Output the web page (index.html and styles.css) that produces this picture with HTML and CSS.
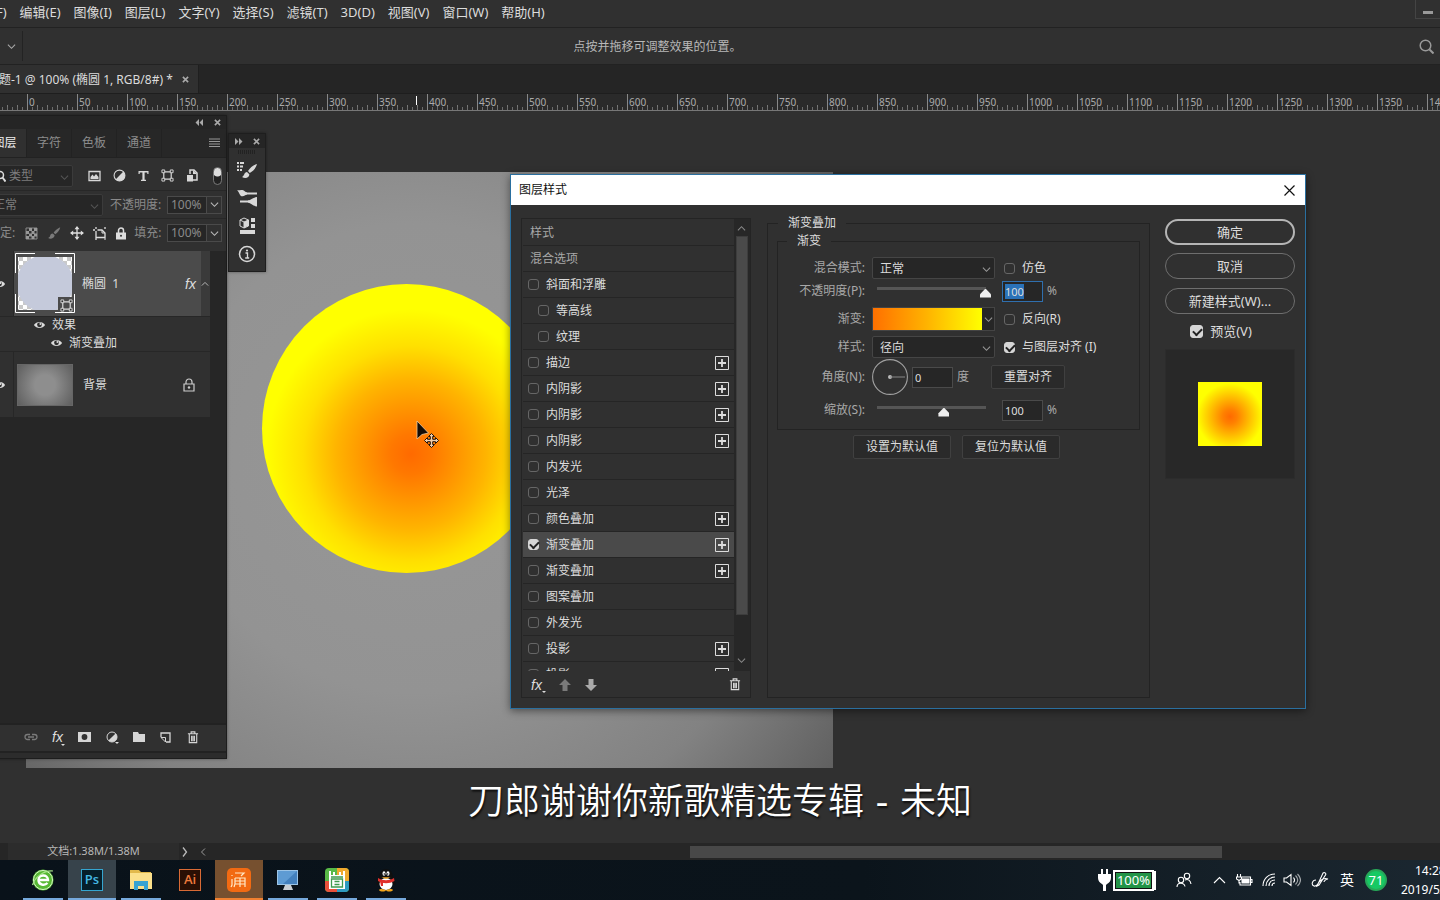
FILE: index.html
```html
<!DOCTYPE html>
<html lang="zh-CN">
<head>
<meta charset="utf-8">
<title>图层样式</title>
<link rel="stylesheet" href="styles.css">
</head>
<body>
<svg class="defs" aria-hidden="true">
  <symbol id="chev" viewBox="0 0 10 10"><path d="M1 3l4 4 4-4" fill="none" stroke="currentColor" stroke-width="1.2"/></symbol>
  <symbol id="eye" viewBox="0 0 14 10"><path d="M1 5C3.500 .6 10.500 .6 13 5 10.500 9.400 3.500 9.400 1 5z" fill="currentColor"/><circle cx="7" cy="4.800" r="2.600" fill="#2f2f2f"/><circle cx="8" cy="3.900" r="1.100" fill="currentColor"/></symbol>
  <symbol id="close" viewBox="0 0 8 8"><path d="M1 1l6 6M7 1L1 7" stroke="currentColor" stroke-width="1.800"/></symbol>
  <symbol id="trash" viewBox="0 0 12 14"><path d="M.5 3h11M4 3V1h4v2M2 3v9.500h8V3M4.500 5v6M6 5v6M7.500 5v6" fill="none" stroke="currentColor" stroke-width="1.200"/></symbol>
  <symbol id="brush" viewBox="0 0 18 18"><path d="M17 1.500c-3 1.200-6.500 4-8.500 7l2 2.200C13.500 8.500 16.500 5 17 1.500zM7.500 9.500c-2 0-3 1-3.400 2.800C3.800 14 3 15 1.500 15.500 4 17 9.500 16.500 9.800 12z" fill="currentColor"/></symbol>
  <symbol id="frame" viewBox="0 0 14 14"><path d="M3 3h8v8H3z" fill="none" stroke="currentColor" stroke-width="1.300"/><path d="M1 1h3v3H1zM10 1h3v3h-3zM1 10h3v3H1zM10 10h3v3h-3z" fill="#303030" stroke="currentColor"/></symbol>
  <symbol id="half" viewBox="0 0 12 12"><circle cx="6" cy="6" r="5" fill="none" stroke="currentColor"/><path d="M9.600 2.400A5 5 0 1 1 2.400 9.600z" fill="currentColor"/></symbol>
  <symbol id="plus" viewBox="0 0 14 14"><path d="M.5.5h13v13H.5z" fill="none" stroke="currentColor"/><path d="M7 3v8M3 7h8" stroke="currentColor" stroke-width="1.800"/></symbol>
</svg>

<div class="app">
  <header class="menubar">
    <nav class="menus">
      <button>文件(F)</button><button>编辑(E)</button><button>图像(I)</button><button>图层(L)</button><button>文字(Y)</button><button>选择(S)</button><button>滤镜(T)</button><button>3D(D)</button><button>视图(V)</button><button>窗口(W)</button><button>帮助(H)</button>
    </nav>
    <button class="minimise" aria-label="最小化"><span></span></button>
  </header>

  <div class="options">
    <button class="tool-drop" aria-label="工具预设"><svg width="9" height="9"><use href="#chev"/></svg></button>
    <p class="hint">点按并拖移可调整效果的位置。</p>
    <button class="search" aria-label="搜索"><svg width="15" height="15" viewBox="0 0 15 15"><circle cx="6.500" cy="6.500" r="5.300" fill="none" stroke="currentColor" stroke-width="1.500"/><path d="M10.500 10.500l4 4" stroke="currentColor" stroke-width="2"/></svg></button>
  </div>

  <div class="tabs">
    <div class="doc-tab"><span>未标题-1 @ 100% (椭圆 1, RGB/8#) *</span><button aria-label="关闭文档"><svg width="7" height="7"><use href="#close"/></svg></button></div>
  </div>

  <div class="ruler" id="ruler"><i class="ruler-mark"></i></div>

  <main class="workspace">
    <div class="document"><div class="ellipse"></div></div>

    <section class="panel">
      <div class="panel-head"><svg width="8" height="7" viewBox="0 0 8 7"><path d="M4 0L.5 3.500 4 7zM8 0L4.500 3.500 8 7z" fill="currentColor"/></svg><button aria-label="关闭面板"><svg width="7" height="7"><use href="#close"/></svg></button></div>
      <div class="panel-tabs">
        <button class="on">图层</button><button>字符</button><button>色板</button><button>通道</button>
        <svg class="burger" width="11" height="9" viewBox="0 0 11 9"><path d="M0 1h11M0 3.500h11M0 6h11M0 8.500h11" stroke="currentColor"/></svg>
      </div>
      <div class="prow filter">
        <div class="pick kind"><svg width="12" height="12" viewBox="0 0 12 12"><circle cx="6" cy="5" r="3.500" fill="none" stroke="#ddd" stroke-width="1.500"/><path d="M8.500 7.500l3 4" stroke="#ddd" stroke-width="2"/></svg><select aria-label="类型"><option>类型</option></select><svg class="arrow" width="9" height="9"><use href="#chev"/></svg></div>
        <div class="filter-icons">
          <svg width="13" height="12" viewBox="0 0 13 12"><path d="M1 1.500h11v9H1z" fill="none" stroke="currentColor" stroke-width="1.300"/><path d="M2.500 9V7l2-2.500L6 6.500 8 4l2.500 3v2z" fill="currentColor"/></svg>
          <svg width="13" height="13"><use href="#half"/></svg>
          <svg width="11" height="12" viewBox="0 0 11 12"><path d="M.5 1h10v3H9.300V2.500H6.600v7.300H8V11H3V9.800h1.400V2.500H1.700V4H.5z" fill="currentColor"/></svg>
          <svg width="13" height="13"><use href="#frame"/></svg>
          <svg width="12" height="13" viewBox="0 0 12 13"><path d="M4 5V1h4l3 3v7H7" fill="none" stroke="currentColor" stroke-width="1.500"/><path d="M1 6h6v6.500H1zM7 1v4h4" fill="currentColor"/></svg>
        </div>
        <span class="toggle"></span>
      </div>
      <div class="prow blend">
        <div class="pick mode"><select aria-label="混合模式"><option>正常</option></select><svg class="arrow" width="9" height="9"><use href="#chev"/></svg></div>
        <label for="po">不透明度:</label>
        <div class="num"><input id="po" value="100%"><button aria-label="展开"><svg width="9" height="9"><use href="#chev"/></svg></button></div>
      </div>
      <div class="prow lock">
        <span>锁定:</span>
        <div class="lock-icons">
          <svg width="13" height="13" viewBox="0 0 13 13"><path d="M1 1h11v11H1z" fill="none" stroke="#888"/><path d="M4 1h3v3H4zM9 1h3v3H9zM1 4h3v3H1zM6.500 4h3v3h-3zM4 6.500h3v3H4zM9 6.500h3v3H9zM1 9h3v3H1zM6.500 9h3v3h-3z" fill="#999"/></svg>
          <svg width="14" height="14" class="dim"><use href="#brush"/></svg>
          <svg width="14" height="14" viewBox="0 0 14 14"><path d="M7 1v12M1 7h12" stroke="currentColor" stroke-width="1.300"/><path d="M7 0l2.500 3.200h-5zM7 14l2.500-3.200h-5zM0 7l3.200-2.500v5zM14 7l-3.200-2.500v5z" fill="currentColor"/></svg>
          <svg width="14" height="13" viewBox="0 0 14 13"><path d="M3 0v2M0 3h2M12 0v2M3 11v2M4.500 3H9l3 3v4.500H3V4" fill="none" stroke="currentColor" stroke-width="1.300"/><path d="M9 3v3h3M12 11v2" fill="none" stroke="currentColor"/></svg>
          <svg width="10" height="13" viewBox="0 0 10 13"><path d="M2.500 6V3.500a2.500 2.500 0 0 1 5 0V6" fill="none" stroke="currentColor" stroke-width="1.500"/><path d="M0 5.500h10v7H0z" fill="currentColor"/><circle cx="5" cy="8.800" r="1" fill="#303030"/></svg>
        </div>
        <label for="pf">填充:</label>
        <div class="num"><input id="pf" value="100%"><button aria-label="展开"><svg width="9" height="9"><use href="#chev"/></svg></button></div>
      </div>
      <div class="layers">
        <div class="layer selected">
          <div class="vis"><svg width="13" height="10"><use href="#eye"/></svg></div>
          <div class="thumb shape"><svg width="60" height="60" viewBox="0 0 60 60"><defs><pattern id="ck" width="8" height="8" patternUnits="userSpaceOnUse"><path d="M0 0h8v8H0z" fill="#fff"/><path d="M0 0h4v4H0zM4 4h4v4H4z" fill="#c9c9c9"/></pattern><clipPath id="tc"><path d="M3 4h54v53H3z"/></clipPath></defs><path d="M3 4h54v53H3z" fill="url(#ck)"/><circle cx="30" cy="30.500" r="28.500" fill="#c5cadb" clip-path="url(#tc)"/><path d="M43 44h17v16H43z" fill="#4b4b4b"/><path d="M.5 20V.5H20M40 .5h19.500V20M.5 41v18.500H20M40 59.500h19.500V41" fill="none" stroke="#fff"/><svg x="45" y="46" width="13" height="13"><use href="#frame"/></svg></svg></div>
          <span class="name">椭圆 &nbsp;1</span><em class="fx">fx</em><span class="fold"><svg width="8" height="8" class="flip"><use href="#chev"/></svg></span>
        </div>
        <div class="effects">
          <div class="effect"><svg width="13" height="10"><use href="#eye"/></svg>效果</div>
          <div class="effect sub"><svg width="13" height="10"><use href="#eye"/></svg>渐变叠加</div>
        </div>
        <div class="layer">
          <div class="vis"><svg width="13" height="10"><use href="#eye"/></svg></div>
          <div class="thumb back"></div>
          <span class="name">背景</span><svg class="padlock" width="12" height="14" viewBox="0 0 12 14"><path d="M3 6V4a3 3 0 0 1 6 0v2M1 6h10v7H1z" fill="none" stroke="currentColor" stroke-width="1.200"/><circle cx="6" cy="9.500" r="1.200" fill="currentColor"/></svg>
        </div>
      </div>
      <div class="panel-tools">
        <button class="dim" aria-label="链接"><svg width="14" height="8" viewBox="0 0 14 8"><path d="M6 1.500H3.500a2.500 2.500 0 0 0 0 5H6M8 1.500h2.500a2.500 2.500 0 0 1 0 5H8M4 4h6" fill="none" stroke="currentColor" stroke-width="1.300"/></svg></button>
        <button class="fxb">fx<i></i></button>
        <button aria-label="蒙版"><svg width="13" height="10" viewBox="0 0 13 10"><path d="M0 0h13v10H0z" fill="currentColor"/><circle cx="6.500" cy="5" r="2.900" fill="#303030"/></svg></button>
        <button aria-label="调整"><svg width="12" height="12"><use href="#half"/></svg><i></i></button>
        <button aria-label="新建组"><svg width="12" height="10" viewBox="0 0 12 10"><path d="M0 0h5l1 2h6v8H0z" fill="currentColor"/></svg></button>
        <button aria-label="新建图层"><svg width="11" height="11" viewBox="0 0 11 11"><path d="M1 5V1h9v9H6" fill="none" stroke="currentColor" stroke-width="1.300"/><path d="M1 5.500h4.500V10z" fill="none" stroke="currentColor"/></svg></button>
        <button aria-label="删除图层"><svg width="12" height="13"><use href="#trash"/></svg></button>
      </div>
      <div class="grip"></div>
    </section>

    <aside class="dock">
      <div class="dock-head"><svg width="8" height="7" viewBox="0 0 8 7"><path d="M0 0l3.500 3.500L0 7zM4 0l3.500 3.500L4 7z" fill="currentColor"/></svg><svg width="7" height="7"><use href="#close"/></svg></div>
      <div class="dock-grip"></div>
      <button aria-label="画笔设置"><svg width="22" height="20" viewBox="0 0 22 20"><path d="M1 3h2M4 3h4M1 6.500h2M4 6.500h3M1 10h2M4 10h2" stroke="currentColor" stroke-width="2"/><path d="M21 4c-4 1-7 4-9 7l1.800 2C17 11 20 8 21 4zM11 12c-3 0-2.500 4-5 5 3 1.800 7.500 1 7.300-2.800z" fill="currentColor"/></svg></button>
      <button aria-label="画笔"><svg width="21" height="18" viewBox="0 0 21 18"><path d="M9 4.500h11M3 12.500h9" stroke="currentColor" stroke-width="2"/><path d="M0 1c2 .8 3-.5 5.500 0C7.500 1.300 8 3.200 10 3.500v2C8 6 7.500 7.300 5.500 7.300 2.500 7.300 2.500 3.500 0 1zM11 11.500C14 11 15.500 8.500 20 8v9.500c-4.500-.5-6-3.500-9-4z" fill="currentColor"/></svg></button>
      <button aria-label="库"><svg width="17" height="18" viewBox="0 0 17 18"><path d="M5 1l4.500 2v6L5 11 1 9V3z" fill="none" stroke="currentColor"/><path d="M1 3l4 2 4.500-2M5 5v6" fill="none" stroke="currentColor"/><path d="M5 5l4-2v6l-4 2zM12 1h4v4h-4zM12 7h4v4h-4zM1 13h15v4H1z" fill="currentColor"/></svg></button>
      <button aria-label="信息"><svg width="18" height="18" viewBox="0 0 18 18"><circle cx="9" cy="9" r="7.500" fill="none" stroke="currentColor" stroke-width="1.500"/><circle cx="9" cy="5.500" r="1.100" fill="currentColor"/><path d="M7.500 8h2v5M7.200 13h4" fill="none" stroke="currentColor" stroke-width="1.300"/></svg></button>
    </aside>

    <svg class="pointer" width="24" height="28" viewBox="0 0 24 28"><path d="M2 0v18l5-4.500 6.500-1.500z" fill="#130b05" stroke="#e8c9a0" stroke-width=".8"/><path d="M16.500 12.500l3 3h-1.800v2.800h2.800v-1.800l3 3-3 3v-1.800h-2.800v2.800h1.800l-3 3-3-3h1.800v-2.800h-2.800v1.800l-3-3 3-3v1.800h2.800v-2.800h-1.800z" fill="#f0cfb0" stroke="#20120a"/></svg>

    <section class="dialog" role="dialog" aria-labelledby="dt">
      <div class="dialog-title"><h1 id="dt">图层样式</h1><button aria-label="关闭"><svg width="11" height="11" viewBox="0 0 11 11"><path d="M.5.5l10 10M10.500.5l-10 10" stroke="#111" stroke-width="1.200"/></svg></button></div>
      <div class="dialog-body">
        <div class="style-box">
          <div class="style-main">
            <div class="style-list">
              <div class="srow head">样式</div>
              <div class="srow head">混合选项</div>
              <div class="srow"><label><input type="checkbox">斜面和浮雕</label></div>
              <div class="srow in"><label><input type="checkbox">等高线</label></div>
              <div class="srow in"><label><input type="checkbox">纹理</label></div>
              <div class="srow"><label><input type="checkbox">描边</label><button aria-label="添加"><svg width="14" height="14"><use href="#plus"/></svg></button></div>
              <div class="srow"><label><input type="checkbox">内阴影</label><button aria-label="添加"><svg width="14" height="14"><use href="#plus"/></svg></button></div>
              <div class="srow"><label><input type="checkbox">内阴影</label><button aria-label="添加"><svg width="14" height="14"><use href="#plus"/></svg></button></div>
              <div class="srow"><label><input type="checkbox">内阴影</label><button aria-label="添加"><svg width="14" height="14"><use href="#plus"/></svg></button></div>
              <div class="srow"><label><input type="checkbox">内发光</label></div>
              <div class="srow"><label><input type="checkbox">光泽</label></div>
              <div class="srow"><label><input type="checkbox">颜色叠加</label><button aria-label="添加"><svg width="14" height="14"><use href="#plus"/></svg></button></div>
              <div class="srow current"><label><input type="checkbox" checked>渐变叠加</label><button aria-label="添加"><svg width="14" height="14"><use href="#plus"/></svg></button></div>
              <div class="srow"><label><input type="checkbox">渐变叠加</label><button aria-label="添加"><svg width="14" height="14"><use href="#plus"/></svg></button></div>
              <div class="srow"><label><input type="checkbox">图案叠加</label></div>
              <div class="srow"><label><input type="checkbox">外发光</label></div>
              <div class="srow"><label><input type="checkbox">投影</label><button aria-label="添加"><svg width="14" height="14"><use href="#plus"/></svg></button></div>
              <div class="srow"><label><input type="checkbox">投影</label><button aria-label="添加"><svg width="14" height="14"><use href="#plus"/></svg></button></div>
            </div>
            <div class="vscroll"><svg width="9" height="9" class="flip"><use href="#chev"/></svg><div class="vtrack"><div class="vthumb"></div></div><svg width="9" height="9"><use href="#chev"/></svg></div>
          </div>
          <div class="style-tools">
            <button class="fxb">fx<i></i></button>
            <button class="dim" aria-label="上移"><svg width="12" height="12" viewBox="0 0 12 12"><path d="M6 0l6 6H8.500v6h-5V6H0z" fill="currentColor"/></svg></button>
            <button class="mid" aria-label="下移"><svg width="12" height="12" viewBox="0 0 12 12"><path d="M6 12l6-6H8.500V0h-5v6H0z" fill="currentColor"/></svg></button>
            <button class="end" aria-label="删除"><svg width="12" height="13"><use href="#trash"/></svg></button>
          </div>
        </div>

        <fieldset class="overlay">
          <legend>渐变叠加</legend>
          <fieldset class="gradient">
            <legend>渐变</legend>
            <div class="frow r24"><label class="cap" for="bm">混合模式:</label><div class="pick"><select id="bm"><option>正常</option></select><svg class="arrow" width="9" height="9"><use href="#chev"/></svg></div><label class="chk"><input type="checkbox">仿色</label></div>
            <div class="frow r22"><label class="cap" for="op">不透明度(P):</label><input class="slide" id="op" type="range" min="0" max="100" value="100"><div class="field focus"><span>100</span><input aria-label="不透明度数值" value=""></div><span class="unit">%</span></div>
            <div class="frow r34"><label class="cap" for="gr">渐变:</label><div class="swatch"><button id="gr" aria-label="编辑渐变"></button><button class="more" aria-label="渐变列表"><svg width="9" height="9"><use href="#chev"/></svg></button></div><label class="chk"><input type="checkbox">反向(R)</label></div>
            <div class="frow r22"><label class="cap" for="st">样式:</label><div class="pick"><select id="st"><option>径向</option></select><svg class="arrow" width="9" height="9"><use href="#chev"/></svg></div><label class="chk"><input type="checkbox" checked>与图层对齐 (I)</label></div>
            <div class="frow r38"><label class="cap" for="an">角度(N):</label><svg class="dial" width="36" height="36" viewBox="0 0 36 36"><circle cx="18" cy="18" r="17.400" fill="none" stroke="#a0a0a0" stroke-width="1.100"/><circle cx="18" cy="18" r="2" fill="#bbb"/><path d="M18 18h15" stroke="#888"/></svg><input class="box" id="an" value="0"><span class="unit">度</span><button class="btn reset">重置对齐</button></div>
            <div class="frow r28"><label class="cap" for="sc">缩放(S):</label><input class="slide" id="sc" type="range" min="1" max="162" value="100"><input class="box" aria-label="缩放数值" value="100"><span class="unit">%</span></div>
          </fieldset>
          <div class="defaults"><button class="btn">设置为默认值</button><button class="btn">复位为默认值</button></div>
        </fieldset>

        <div class="actions">
          <button class="pill main">确定</button>
          <button class="pill">取消</button>
          <button class="pill new">新建样式(W)...</button>
          <label class="chk"><input type="checkbox" checked>预览(V)</label>
          <div class="preview"><div></div></div>
        </div>
      </div>
    </section>

    <p class="caption">刀郎谢谢你新歌精选专辑<span> - </span>未知</p>
  </main>

  <footer class="status">
    <div class="doc-size">文档:1.38M/1.38M</div>
    <svg width="6" height="10" viewBox="0 0 6 10"><path d="M1 .5L4.500 5 1 9.500" fill="none" stroke="#bbb" stroke-width="1.300"/></svg>
    <svg class="back-arrow" width="6" height="8" viewBox="0 0 6 8"><path d="M5 .5L1.500 4 5 7.500" fill="none" stroke="#999"/></svg>
    <div class="hscroll"><div></div></div>
  </footer>

  <div class="taskbar">
    <div class="apps">
      <button class="task run" aria-label="浏览器"><svg width="24" height="24" viewBox="0 0 24 24"><circle cx="12" cy="12" r="10.500" fill="#57b833"/><circle cx="12" cy="12" r="9.500" fill="none" stroke="#d8f5c8" stroke-width="1"/><path d="M7.500 12h9.500c0-6-9.500-6-9.500 0 0 5 6 6 9 3" fill="none" stroke="#fff" stroke-width="2.400"/><path d="M1.500 17C4 9 13 2 22 3" fill="none" stroke="#a9e58b" stroke-width="1.200"/></svg></button>
      <button class="task run full ps"><span class="logo">Ps</span></button>
      <button class="task run" aria-label="文件资源管理器"><svg width="24" height="22" viewBox="0 0 24 22"><path d="M1 3V1h9l2 2h10v2H1z" fill="#e2b94c"/><path d="M1 4h22v16H1z" fill="#fbe08b"/><path d="M5 21v-9h14v9h-4v-4H9v4z" fill="#38a3d1"/></svg></button>
      <button class="task ai"><span class="logo">Ai</span></button>
      <button class="task run full wps" aria-label="应用"><svg width="26" height="26" viewBox="0 0 26 26"><rect x="1" y="1" width="24" height="24" rx="5" fill="#f26a12"/><path d="M9 11h10v9M9 11v6l-1 3M14 11v9M9 14h10M9 17h10M9 6h9l-3 3M6 8v1M6 12v6l-1 2" fill="none" stroke="#ffe9c8" stroke-width="1.200"/></svg></button>
      <button class="task run" aria-label="此电脑"><svg width="24" height="24" viewBox="0 0 24 24"><path d="M1 2h21v15H1z" fill="#9cc4e6"/><path d="M2 3h19v13H2z" fill="#4380bd"/><path d="M2 3h19L7 16H2z" fill="#5e9bd3"/><path d="M9 17h6l2 5H7z" fill="#c9ced3"/></svg></button>
      <button class="task run" aria-label="应用"><svg width="26" height="26" viewBox="0 0 26 26"><rect x="1" y="1" width="24" height="24" rx="4" fill="#58b947"/><path d="M1 14h12v11H5a4 4 0 0 1-4-4z" fill="#e9503a"/><path d="M13 14h12v7a4 4 0 0 1-4 4h-8z" fill="#2e9ac0"/><path d="M13 1h8a4 4 0 0 1 4 4v9H13z" fill="#f0a92d"/><path d="M5 8h16v14H5z" fill="#fff"/><path d="M6 4v4M20 4v4M10 5v3M16 5v3" stroke="#fff" stroke-width="2"/><path d="M7.500 20v-8h11v8zM7 10h12M10.500 14.500h5M10.500 17.500h5" fill="none" stroke="#3f9b4e" stroke-width="1.300"/></svg></button>
      <button class="task run" aria-label="QQ"><svg width="22" height="24" viewBox="0 0 22 24"><path d="M4 10c0-12 14-12 14 0 2 3 3.500 6 2 7-1 .5-2-1-2-1H4s-1 1.500-2 1c-1.500-1 0-4 2-7z" fill="#101010"/><ellipse cx="11" cy="16" rx="6.500" ry="6" fill="#fff"/><path d="M3 10c5 3 11 3 16 0l.5 3C14 16 8 16 3 13z" fill="#e0302c"/><path d="M5 13h3v5H6z" fill="#e0302c"/><ellipse cx="9" cy="5.500" rx="1.500" ry="2.200" fill="#fff"/><ellipse cx="13" cy="5.500" rx="1.500" ry="2.200" fill="#fff"/><circle cx="9.300" cy="6" r=".7"/><circle cx="12.700" cy="6" r=".7"/><path d="M6.500 9.200h9L11 11z" fill="#f4a61c"/><path d="M4 22c1-2 6-1 7 .5 1-1.500 6-2.500 7-.5-1 2-6 2-7 .5-1 1.500-6 1.500-7-.5z" fill="#f4a61c"/></svg></button>
    </div>
    <div class="tray">
      <div class="power"><svg width="13" height="22" viewBox="0 0 13 22"><path d="M3 0h2v5h3V0h2v5h3v4c0 3-2 5-4 6l-1 1v6H5v-6l-1-1C2 14 0 12 0 9V5h3z" fill="#fff"/></svg><span class="battery">100%</span></div>
      <svg class="people" width="16" height="16" viewBox="0 0 16 16"><circle cx="11" cy="4" r="2.700"/><circle cx="5" cy="8" r="2.700"/><path d="M1 15c0-5 7-5 8-.5M9 8c3-1.500 5.500.5 6 4"/></svg>
      <svg class="up" width="13" height="8" viewBox="0 0 13 8"><path d="M1 7l5.500-5.500L12 7"/></svg>
      <svg class="t1" width="17" height="12" viewBox="0 0 17 12"><path d="M6 3h8.500v8H4V8M14.500 5.500H16v3h-1.500M1.500 0v2.500M4.500 0v2.500M.5 3h5v2L3 6.500.5 5zM3 6v3h1"/><path d="M6 5h7v4H6z" fill="#fff"/></svg>
      <svg class="t2" width="14" height="14" viewBox="0 0 14 14"><path d="M1 13C1 6 6 1 13 1M4 13c0-5 4-9 9-9M7 13c0-3 2-6 6-6M10 13c0-2 1-3 3-3"/></svg>
      <svg class="t3" width="18" height="14" viewBox="0 0 18 14"><path d="M1 5h2.500L8 1.500v11L3.500 9H1zM10.500 4.500c1.300 1.500 1.300 3.500 0 5"/><path d="M12.500 2.500c3 3 3 6 0 9M14.500 1c4 4 4 8 0 12" opacity=".6"/></svg>
      <svg class="t4" width="18" height="16" viewBox="0 0 18 16"><path d="M7 12l5-11c1.500-1 3.500 0 2.500 2L8 13l-2 1zM5 8c-4 0-5 5-2 6s4-3 6-5 5-3 8-2c-2 0-4 2-4 3"/></svg>
      <span class="ime">英</span>
      <span class="score">71</span>
      <time class="clock"><span>14:28</span><span>2019/5/</span></time>
    </div>
  </div>
</div>
<script src="ruler.js"></script>
</body>
</html>
```
FILE: ruler.js
```js
const ruler = document.getElementById('ruler');
const step = 50;
for (let value = 0; value < ruler.clientWidth - step / 2; value += step) {
  const mark = document.createElement('span');
  mark.textContent = value;
  ruler.appendChild(mark);
}
```
FILE: styles.css
```css
* { box-sizing: border-box; }
body { margin: 0; background: #303030; color: #dcdcdc; font: 12px/18px "Noto Sans", "Noto Sans CJK SC", sans-serif; }
button, input, select { font: inherit; color: inherit; margin: 0; padding: 0; border: 0; background: none; border-radius: 0; }
button { display: flex; align-items: center; justify-content: center; white-space: nowrap; }
select { appearance: none; outline: 0; }
p, h1 { margin: 0; font-weight: 400; }
svg { display: block; flex: none; }
.defs { position: absolute; width: 0; height: 0; }
.flip { transform: scaleY(-1); }
.dim { color: #7a7a7a; }

.app { height: 100vh; display: flex; flex-direction: column; overflow: hidden; }

.menubar { height: 28px; flex: none; display: flex; justify-content: space-between; border-bottom: 1px solid #222; overflow: hidden; }
.menus { display: flex; gap: 13px; margin-left: -34px; height: 24px; font-size: 13px; }
.minimise { width: 25px; height: 19px; border-left: 1px solid #444; border-bottom: 1px solid #444; }
.minimise span { width: 10px; height: 3px; margin-top: 7px; background: #999; }

.options { height: 37px; flex: none; display: flex; align-items: center; border-bottom: 1px solid #222; }
.tool-drop { width: 23px; height: 30px; border-right: 1px solid #232323; color: #aaa; }
.hint { flex: 1; text-align: center; color: #b8b8b8; padding: 2px 124px 0 0; }
.search { width: 20px; margin-right: 4px; color: #999; }

.tabs { height: 28px; flex: none; display: flex; background: #252525; }
.doc-tab { display: flex; align-items: center; gap: 9px; margin-left: -39px; padding: 1px 9px 0 14px; background: #303030; border-right: 1px solid #1f1f1f; white-space: nowrap; }
.doc-tab button { color: #aaa; }

.ruler { position: relative; height: 18px; flex: none; display: flex; padding-left: 27px; overflow: hidden; background: repeating-linear-gradient(90deg, #6c6c6c 0 1px, transparent 1px 5px) 2px 100% / 100% 3px no-repeat, repeating-linear-gradient(90deg, #777 0 1px, transparent 1px 10px) 7px 100% / 100% 5px no-repeat, #2a2a2a; border-top: 1px solid #1e1e1e; border-bottom: 1px solid #777; color: #aaa; font-size: 10px; }
.ruler span { flex: 0 0 50px; padding-left: 1px; border-left: 1px solid #888; line-height: 17px; }
.ruler-mark { position: absolute; left: 416px; top: 2px; width: 1px; height: 9px; background: #fff; }

.workspace { position: relative; flex: 1; min-height: 0; overflow: hidden; background: #303030; }
.document { position: absolute; left: 26px; top: 61px; width: 807px; height: 596px; background: radial-gradient(circle at 48% 48%, #979797 0, #939393 45%, #828282 75%, #606060 100%); }
.ellipse { width: 289px; height: 289px; margin: 112px 0 0 236px; border-radius: 50%; background: radial-gradient(circle at 149px 170px, #ff6a00 0, #ff7800 20px, #ffb400 75px, #ffe000 108px, #ffff00 145px); }
.pointer { position: absolute; left: 415px; top: 310px; }

/* layers panel */
.panel { position: absolute; left: -20px; top: 4px; width: 247px; background: #303030; border: 1px solid #1d1d1d; box-shadow: 0 0 3px #0006; }
.panel-head { height: 13px; display: flex; align-items: center; justify-content: flex-end; gap: 11px; padding-right: 5px; background: #252525; color: #aaa; }
.panel-tabs { height: 29px; display: flex; background: #272727; border-bottom: 1px solid #222; position: relative; }
.panel-tabs button { width: 45px; border-right: 1px solid #222; color: #8c8c8c; }
.panel-tabs .on { width: 46px; background: #303030; color: #eee; padding-left: 2px; }
.burger { margin: 9px 6px 0 auto; color: #999; }
.prow { display: flex; align-items: center; height: 28px; border-bottom: 1px solid #272727; color: #8a8a8a; }
.prow.filter { height: 33px; padding: 3px 4px 0 6px; }
.pick { position: relative; width: 123px; height: 22px; background: #262626; border: 1px solid #454545; border-radius: 2px; display: flex; align-items: center; }
.pick select { flex: 1; height: 100%; min-width: 0; padding-left: 7px; padding-top: 1px; }
.pick .arrow { position: absolute; right: 3px; top: 7px; color: #999; pointer-events: none; }
.prow .pick { border-color: #3b3b3b; color: #7d7d7d; }
.prow .pick .arrow { color: #555; }
.kind { width: 86px; padding-left: 6px; }
.kind select { padding-left: 3px; }
.filter-icons { display: flex; align-items: center; gap: 12px; margin-left: 15px; color: #d8d8d8; }
.toggle { width: 9px; height: 18px; margin-left: auto; border: 1px solid #777; border-radius: 5px; background: radial-gradient(circle at 50% 4px, #ddd 4px, #222 5px); }
.blend .mode { width: 118px; margin-left: 4px; }
.blend, .lock { padding-right: 4px; }
.blend label { margin-left: 7px; }
.num { width: 55px; height: 18px; margin-left: auto; display: flex; border: 1px solid #4a4a4a; }
.num input { width: 39px; padding-left: 3px; background: #262626; border-right: 1px solid #4a4a4a; }
.num button { flex: 1; color: #bbb; }
.lock { padding-left: 7px; border-bottom: 0; height: 32px; padding-bottom: 4px; }
.lock-icons { display: flex; align-items: center; gap: 9px; margin: 0 8px 0 10px; color: #ddd; }
.layers { height: 474px; background: #262626; border-bottom: 2px solid #222; padding-right: 16px; }
.layer { height: 65px; display: flex; align-items: center; background: #303030; position: relative; }
.vis { width: 33px; align-self: stretch; display: flex; align-items: center; padding-left: 12px; background: #303030; border-right: 1px solid #272727; color: #ddd; }
.selected { background: linear-gradient(90deg, #4b4b4b calc(100% - 9px), #3a3a3a calc(100% - 9px)); }
.thumb { margin-left: 1px; }
.shape { margin-bottom: 2px; }
.back { width: 56px; height: 42px; margin: 0 3px 0 3px; border: 1px solid #666; background: radial-gradient(circle, #8e8e8e 30%, #5e5e5e 100%); }
.name { margin-left: 7px; flex: 1; }
.fx, .fxb { font: italic 14px/16px "Liberation Sans", sans-serif; color: #ddd; }
.fold { width: 9px; margin-left: 5px; color: #bbb; }
.padlock { margin-right: 15px; color: #ccc; }
.effects { height: 36px; background: #303030; padding-left: 33px; border-top: 1px solid #272727; border-bottom: 1px solid #272727; }
.effect { height: 18px; padding-left: 19px; display: flex; align-items: center; gap: 6px; line-height: 14px; padding-bottom: 3px; }
.effect.sub { padding-left: 36px; }
.panel-tools { height: 26px; display: flex; align-items: center; padding: 0 0 2px 36px; color: #d5d5d5; }
.panel-tools button { width: 27px; position: relative; }
.fxb i, .panel-tools i { display: block; width: 0; height: 0; border: 2px solid transparent; border-top-color: #ddd; border-bottom: 0; align-self: flex-end; }
.panel-tools i { position: absolute; right: 6px; bottom: -1px; }
.grip { height: 7px; border-top: 2px solid #222; background: #2c2c2c; }

.dock { position: absolute; left: 228px; top: 22px; width: 38px; height: 139px; background: #303030; border: 1px solid #1e1e1e; color: #d8d8d8; display: flex; flex-direction: column; align-items: center; box-shadow: 0 0 3px #0006; }
.dock-head { width: 100%; height: 14px; display: flex; align-items: center; justify-content: space-between; padding: 0 5px 0 6px; background: #252525; color: #aaa; }
.dock-grip { width: 18px; height: 4px; margin: 2px 0; background: repeating-linear-gradient(90deg, #222 0 1px, transparent 1px 2px); }
.dock button { height: 28px; }

/* layer style dialog */
.dialog { position: absolute; left: 510px; top: 63px; width: 796px; height: 535px; display: flex; flex-direction: column; background: #303030; border: 1px solid #2a6f9f; box-shadow: 0 2px 8px #0007; }
.dialog-title { height: 30px; flex: none; display: flex; align-items: center; justify-content: space-between; padding: 0 10px 0 8px; background: #fff; color: #111; }
.dialog-title h1 { font-size: 12px; }
.dialog-body { flex: 1; min-height: 0; display: flex; padding: 13px 10px 10px; }
.style-box { width: 230px; flex: none; display: flex; flex-direction: column; border: 1px solid #242424; }
.style-main { height: 452px; display: flex; }
.style-list { flex: 1; overflow: hidden; padding: 1px 0 0 1px; }
.srow { height: 26px; display: flex; align-items: center; justify-content: space-between; padding: 0 5px; border-bottom: 1px solid #252525; }
.srow label { display: flex; align-items: center; gap: 7px; }
.srow.head { padding-left: 7px; color: #a8a8a8; }
.srow.in { padding-left: 15px; }
.srow.current { background: #4a4a4a; }
input[type="checkbox"] { appearance: none; position: relative; width: 11px; height: 11px; flex: none; border: 1px solid #666; border-radius: 3px; }
input[type="checkbox"]:checked { background: #d6d6d6; border-color: #d6d6d6; }
input[type="checkbox"]:checked::before { content: ""; position: absolute; left: 1px; top: 1px; width: 7px; height: 4px; border: solid #222; border-width: 0 0 2px 2px; transform: rotate(-45deg); }
.vscroll { width: 16px; display: flex; flex-direction: column; align-items: center; background: #272727; padding: 5px 1px 6px 0; color: #888; }
.vtrack { flex: 1; width: 12px; margin: 3px 0; }
.vthumb { height: 91%; background: #4a4a4a; border: 1px solid #3d3d3d; }
.style-tools { flex: 1; display: flex; align-items: center; gap: 14px; padding: 1px 9px 0 10px; }
.style-tools .fxb { width: 13px; }
.style-tools .mid { color: #aaa; }
.style-tools .end { margin-left: auto; }
fieldset { margin: 0; min-width: 0; border: 1px solid #232323; }
legend { padding: 0 10px; line-height: 18px; }
.overlay { width: 383px; flex: none; margin: -4px 0 0 16px; padding: 0 9px; }
.overlay > legend { margin-left: 1px; }
.gradient { padding: 6px 0 5px; }
.gradient > legend { margin-left: 9px; }
.frow { display: flex; align-items: center; }
.r22 { height: 22px; } .r24 { height: 24px; } .r34 { height: 34px; } .r38 { height: 38px; } .r28 { height: 28px; }
.cap { width: 88px; margin-right: 6px; padding-right: 1px; text-align: right; color: #a8a8a8; flex: none; }
.chk { display: flex; align-items: center; gap: 7px; margin-left: 9px; }
.slide { appearance: none; width: 119px; height: 22px; margin: 0 11px 0 0; background: linear-gradient(#555, #555) 50% 7px / 109px 3px no-repeat; }
.slide::-webkit-slider-thumb { appearance: none; width: 11px; height: 9px; margin-top: 4px; background: #eee; clip-path: polygon(50% 0, 100% 65%, 100% 100%, 0 100%, 0 65%); }
.box, .field { width: 41px; height: 21px; border: 1px solid #4a4a4a; background: #262626; padding: 0 2px; color: #ddd; font-size: 11px; }
.field { display: flex; align-items: center; }
.field span { background: #2a72b8; line-height: 15px; }
.field input { flex: 1; min-width: 0; }
.field.focus { border-color: #2f6fae; }
.unit { margin-left: 4px; color: #a8a8a8; }
.swatch { display: flex; width: 123px; height: 24px; border: 1px solid #444; }
.swatch button:first-child { width: 109px; background: linear-gradient(90deg, #ff7000, #ffb400 50%, #ffff00); }
.swatch .more { flex: 1; background: #262626; color: #999; }
.dial { margin-right: 4px; }
.btn { height: 24px; padding: 0 12px; background: #2a2a2a; border: 1px solid #404040; border-radius: 2px; }
.reset { margin-left: 22px; }
.defaults { display: flex; gap: 11px; margin-top: 5px; padding-left: 76px; }
.actions { flex: 1; margin-left: 15px; padding-top: 1px; display: flex; flex-direction: column; font-size: 13px; }
.pill { height: 26px; margin-bottom: 8px; border: 1px solid #6e6e6e; border-radius: 13px; }
.pill.main { border-color: #b5b5b5; border-width: 2px; }
.pill.new { margin: 1px 0 8px; }
.actions .chk { justify-content: center; margin: 0 18px 9px 0; }
.actions input { width: 13px; height: 13px; }
.actions input[type="checkbox"]:checked::before { left: 2px; top: 2px; }
.preview { height: 130px; display: grid; place-items: center; background: #282828; border: 1px solid #2c2c2c; }
.preview div { width: 64px; height: 64px; background: radial-gradient(circle at 50% 54%, #ff6a00 0, #ff8000 15%, #ffff00 70%); }

.caption { position: absolute; left: 0; right: 0; top: 661px; text-align: center; color: #fff; font: 350 36px/52px "Noto Sans CJK SC", sans-serif; text-shadow: 1px 2px 2px #000b; }
.caption span { font-family: "DejaVu Sans", sans-serif; font-weight: 400; line-height: 36px; }

.status { height: 17px; flex: none; display: flex; align-items: center; background: #262626; color: #b8b8b8; }
.doc-size { width: 171px; height: 17px; margin: 0 3px 0 8px; text-align: center; background: #2c2c2c; font-size: 11px; line-height: 16px; }
.back-arrow { margin-left: 12px; }
.hscroll { flex: 1; padding-left: 484px; padding-right: 218px; }
.hscroll div { height: 12px; background: #484848; }

.taskbar { height: 40px; flex: none; display: flex; justify-content: space-between; background: linear-gradient(90deg, #09121a, #0b141b 60%, #1b2730); color: #fff; overflow: hidden; }
.apps { display: flex; gap: 1px; margin-left: 19px; }
.task { width: 48px; height: 40px; position: relative; }
.run::after { content: ""; position: absolute; left: 4px; right: 4px; bottom: 0; height: 2px; background: #76a9dc; }
.full::after { left: 0; right: 0; }
.ps { background: #37434b; }
.wps { background: #76502f; }
.wps::after { background: #f08030; }
.logo { width: 22px; height: 22px; border: 1px solid #35a5d0; background: #061e2a; color: #45b8e4; font: 600 13px/19px "Open Sans", sans-serif; text-align: center; }
.ai .logo { border-color: #d86a35; background: #2a0f04; color: #ef7a3c; }
.tray { display: flex; align-items: center; flex: none; width: 342px; }
.tray > * { flex: none; }
.tray > svg { fill: none; stroke: #fff; stroke-width: 1.1; }
.power { display: flex; align-items: center; gap: 2px; width: 60px; margin-right: 18px; }
.battery { width: 41px; height: 21px; border: 2px solid #fff; background: #239447; box-shadow: inset 0 0 0 1px #111, 3px 0 0 -1px #fff; font-size: 13px; line-height: 17px; text-align: center; }
.up { margin-left: 21px; }
.t1 { margin-left: 10px; }
.t2 { margin-left: 9px; }
.t3 { margin-left: 7px; }
.t4 { margin-left: 10px; }
.ime { width: 14px; margin-left: 11px; font-size: 14px; }
.score { width: 22px; height: 22px; margin-left: 11px; border-radius: 50%; border: 2px solid #27a858; background: #16c964; font-size: 13px; line-height: 18px; text-align: center; }
.clock { display: flex; flex-direction: column; margin-left: 14px; font-size: 12px; line-height: 19px; }
.clock span:first-child { padding-left: 14px; }
```
